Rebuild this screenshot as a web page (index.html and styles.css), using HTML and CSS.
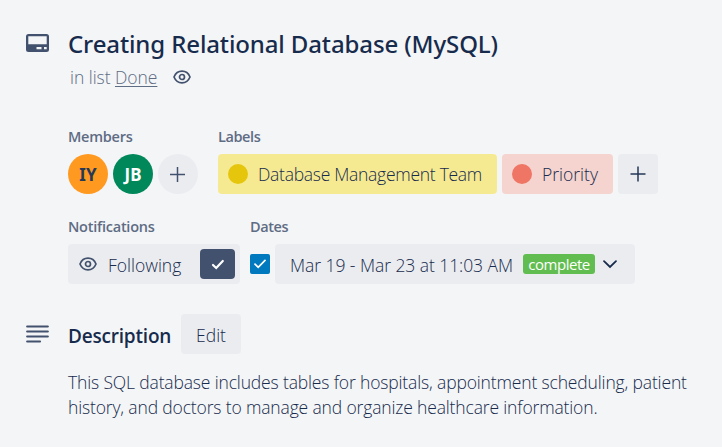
FILE: index.html
```html
<!DOCTYPE html>
<html lang="en">
<head>
<meta charset="utf-8">
<title>Creating Relational Database (MySQL)</title>
<link rel="stylesheet" href="styles.css">
</head>
<body>
<main class="card">
  <header class="section header">
    <svg class="section-icon" width="25" height="20" viewBox="0 0 25 20"><path fill="#42526e" fill-rule="evenodd" d="M3.500 1h18a2.500 2.500 0 0 1 2.500 2.500v13a2.500 2.500 0 0 1-2.500 2.500h-18A2.500 2.500 0 0 1 1 16.500v-13A2.500 2.500 0 0 1 3.500 1zM3.300 3.200v8h18.400v-8zM11.500 14v2.300h5V14zM19 14v2.300h2.700V14z"/></svg>
    <div>
      <h1 class="title">Creating Relational Database (MySQL)</h1>
      <p class="in-list"><span>in list <a class="list-link">Done</a></span>
        <svg width="20" height="16" viewBox="0 0 20 16" fill="none" stroke="#42526e"><path stroke-width="1.700" d="M2 8C3.500 4.300 6.300 2.200 10 2.200S16.500 4.300 18 8c-1.500 3.700-4.300 5.800-8 5.800S3.500 11.700 2 8z"/><circle cx="10" cy="8" r="2.500" stroke-width="1.700"/></svg>
      </p>
    </div>
  </header>

  <div class="row">
    <section class="members">
      <h2 class="label members-label">Members</h2>
      <div class="items">
        <span class="avatar orange">IY</span>
        <span class="avatar green">JB</span>
        <span class="avatar add"><svg width="16" height="16" viewBox="0 0 16 16" stroke="#42526e" stroke-width="1.500"><path d="M0 8.500h15M7.500 1v15"/></svg></span>
      </div>
    </section>
    <section>
      <h2 class="label labels-label">Labels</h2>
      <div class="items">
        <span class="tag yellow"><i class="dot"></i><span class="team">Database Management Team</span></span>
        <span class="tag red"><i class="dot"></i><span class="priority">Priority</span></span>
        <span class="tag add-label"><svg width="16" height="16" viewBox="0 0 16 16" stroke="#253858" stroke-width="1.500"><path d="M.500 8h15M8 .500v15"/></svg></span>
      </div>
    </section>
  </div>

  <div class="row second">
    <section class="notifications">
      <h2 class="label notifications-label">Notifications</h2>
      <div class="button follow">
        <svg width="20" height="16" viewBox="0 0 20 16" fill="none" stroke="#42526e"><path stroke-width="1.700" d="M2 8C3.500 4.300 6.300 2.200 10 2.200S16.500 4.300 18 8c-1.500 3.700-4.300 5.800-8 5.800S3.500 11.700 2 8z"/><circle cx="10" cy="8" r="2.500" stroke-width="1.700"/></svg>
        <span class="following">Following</span>
        <span class="follow-check"><svg width="14" height="12" viewBox="0 0 14 12" fill="none" stroke="#fff" stroke-width="2.200" stroke-linecap="round"><path d="M2 7l3.200 3L11.800 3"/></svg></span>
      </div>
    </section>
    <section>
      <h2 class="label dates-label">Dates</h2>
      <div class="items">
        <span class="checkbox"><svg width="14" height="12" viewBox="0 0 14 12" fill="none" stroke="#fff" stroke-width="1.700" stroke-linecap="round"><path d="M2 6.200l3.200 3.200L12 2.400"/></svg></span>
        <div class="button date">
          <span class="date-text">Mar 19 - Mar 23 at 11:03 AM</span>
          <span class="badge">complete</span>
          <svg width="16" height="10" viewBox="0 0 16 10" fill="none" stroke="#172b4d" stroke-width="1.800" stroke-linecap="round"><path d="M2 2.200l6 5.800L14 2.200"/></svg>
        </div>
      </div>
    </section>
  </div>

  <section class="section description">
    <svg class="section-icon lines" width="25" height="20" viewBox="0 0 25 20" stroke="#42526e" stroke-width="2.200" stroke-linecap="round"><path d="M2.200 2.500h20.600M2.200 7.500h20.600M2.200 12.500h20.600M2.200 17.500h12.800"/></svg>
    <div>
      <div class="description-head"><h3 class="description-title">Description</h3><span class="button edit">Edit</span></div>
      <p class="body-text">This SQL database includes tables for hospitals, appointment scheduling, patient<br>history, and doctors to manage and organize healthcare information.</p>
    </div>
  </section>
</main>
</body>
</html>
```
FILE: styles.css
```css
* { box-sizing: border-box; }
body {
  margin: 0;
  background: #f4f5f7;
  color: #172b4d;
  font: 350 17.5px/25px "Open Sans", "Noto Sans", sans-serif;
  white-space: nowrap;
}
h1, h2, h3, p { margin: 0; }
svg { display: block; flex: none; }
.card { padding: 29px 24px 0; }
.section { display: flex; }
.section-icon { margin: 4px 19px 0 1px; flex: none; }
.section > div { margin-left: -1px; }
.title {
  font-family: "Noto Sans", "Open Sans", sans-serif;
  font-size: 24px;
  line-height: 30px;
  font-weight: 500;
  letter-spacing: -0.12px;
}
.in-list {
  display: flex;
  align-items: center;
  gap: 15px;
  height: 25px;
  margin: 6px 0 0 2px;
  color: #5e6c84;
  letter-spacing: -0.04px;
}
.in-list svg { margin-top: -2px; }
.list-link { text-decoration: underline; text-underline-offset: 2px; }
.row { display: flex; gap: 20px; margin: 34px 0 0 44px; }
.row.second { gap: 10px; margin-top: 20px; }
.label {
  height: 25px;
  margin-bottom: 5px;
  color: #5e6c84;
  font-size: 14.5px;
  line-height: 25px;
  font-weight: 600;
  letter-spacing: -0.25px;
}
.labels-label, .dates-label { letter-spacing: -0.4px; }
.items { display: flex; align-items: center; gap: 5px; height: 40px; }
.avatar {
  display: flex;
  align-items: center;
  justify-content: center;
  width: 40px;
  height: 40px;
  border-radius: 50%;
  font-family: "Noto Sans", sans-serif;
  font-size: 17px;
  font-weight: 700;
}
.orange { background: #ff991f; color: #253858; }
.green { background: #00875a; color: #fff; }
.add { background: #ebecf0; }
.tag {
  display: flex;
  align-items: center;
  gap: 10px;
  height: 40px;
  padding-left: 10px;
  border-radius: 4px;
}
.team { letter-spacing: -0.28px; }
.dot { width: 20px; height: 20px; border-radius: 50%; }
.yellow { width: 279px; background: #f5ea92; }
.yellow .dot { background: #e6c60d; }
.red { width: 111px; background: #f5d3ce; }
.red .dot { background: #ef7564; }
.add-label { width: 40px; padding-left: 12px; background: #ebecf0; }
.button {
  display: flex;
  align-items: center;
  height: 40px;
  border-radius: 4px;
  background: #ebecf0;
}
.follow { width: 172px; padding: 0 5px 0 10px; }
.following { margin-left: 10px; padding-top: 2px; }
.follow-check {
  display: flex;
  align-items: center;
  justify-content: center;
  width: 35px;
  height: 30px;
  margin-left: auto;
  border-radius: 4px;
  background: #42526e;
}
.checkbox {
  display: flex;
  align-items: center;
  justify-content: center;
  width: 20px;
  height: 20px;
  border-radius: 2px;
  background: #0079bf;
}
.date { width: 360px; padding: 0 17px 0 15px; }
.date-text { width: 233px; padding-top: 2px; letter-spacing: -0.06px; }
.badge {
  width: 72px;
  height: 20px;
  margin-right: 7px;
  border-radius: 3px;
  background: #61bd4f;
  color: #fff;
  font-size: 15px;
  line-height: 21px;
  font-weight: 500;
  letter-spacing: -0.45px;
  text-align: center;
}
.description { margin-top: 30px; }
.lines { margin-top: 10px; }
.description-head { display: flex; align-items: center; height: 40px; }
.description-title {
  width: 113px;
  padding-top: 5px;
  font-size: 19px;
  font-weight: 600;
  letter-spacing: -0.2px;
}
.edit { width: 60px; padding-top: 2px; justify-content: center; }
.body-text { margin-top: 16px; letter-spacing: -0.15px; }
```
